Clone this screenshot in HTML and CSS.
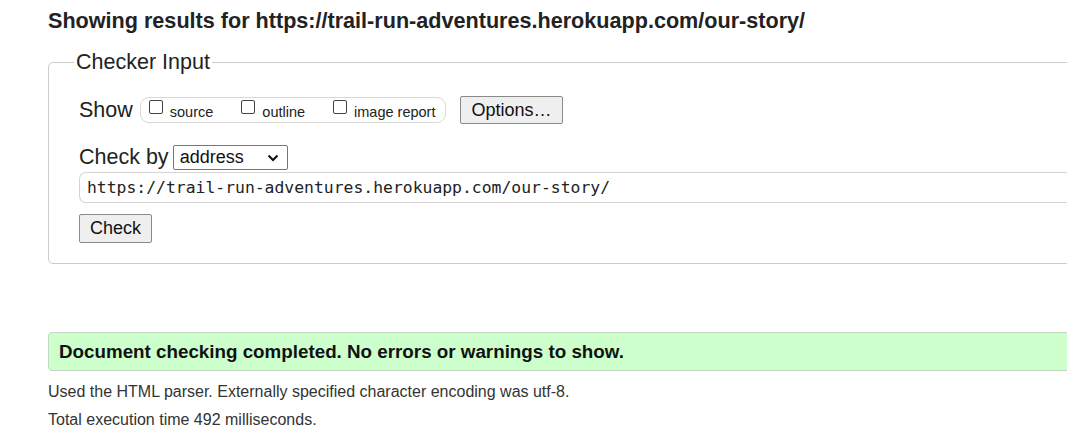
FILE: index.html
```html
<!DOCTYPE html>
<html lang="en">
<head>
<meta charset="utf-8">
<title>Nu Html Checker</title>
<link rel="stylesheet" href="styles.css">
</head>
<body>
<div class="page">
  <h2 class="title">Showing results for https://trail-run-adventures.herokuapp.com/our-story/</h2>
  <fieldset class="checker">
    <legend class="legend">Checker Input</legend>
    <div class="row show-row">
      <span class="label">Show</span>
      <div class="group">
        <label class="opt"><input type="checkbox" class="cb"><span>source</span></label>
        <label class="opt"><input type="checkbox" class="cb"><span>outline</span></label>
        <label class="opt"><input type="checkbox" class="cb"><span>image report</span></label>
      </div>
      <button class="btn btn-options" type="button">Options…</button>
    </div>
    <div class="row by-row">
      <span class="label">Check by</span>
      <div class="select">
        <span>address</span>
        <svg class="chev" width="12" height="8" viewBox="0 0 12 8"><path d="M1.5 1.5 L6 6 L10.5 1.5" fill="none" stroke="#111" stroke-width="2"/></svg>
      </div>
    </div>
    <div class="url">https://trail-run-adventures.herokuapp.com/our-story/</div>
    <div class="row check-row">
      <button class="btn btn-check" type="button">Check</button>
    </div>
  </fieldset>
  <div class="success">Document checking completed. No errors or warnings to show.</div>
  <p class="details">Used the HTML parser. Externally specified character encoding was utf-8.</p>
  <p class="details">Total execution time 492 milliseconds.</p>
</div>
</body>
</html>
```

FILE: styles.css
```css
html, body {
  margin: 0;
  padding: 0;
  background: #fff;
  overflow: hidden;
}
body {
  font-family: "Liberation Sans", Arial, sans-serif;
  color: #222;
}
.page {
  padding: 0 0 0 48px;
  width: 1100px;
}
.title {
  margin: 0;
  padding-top: 8px;
  font-size: 21.6px;
  line-height: 25px;
  font-weight: bold;
  color: #222;
}
.checker {
  margin: 17px 0 0 0;
  padding: 0 0 20px 30px;
  border: 1px solid #ccc;
  border-radius: 5px;
  min-width: 0;
}
.legend {
  margin-left: -5px;
  padding: 0 2px 0 2px;
  font-size: 21.5px;
  line-height: 25px;
  color: #222;
}
.row {
  display: flex;
  align-items: center;
}
.show-row {
  margin-top: 21px;
  height: 28px;
}
.label {
  font-size: 21.5px;
  color: #222;
}
.group {
  display: flex;
  align-items: center;
  margin-left: 7px;
  height: 24px;
  padding: 0 10px 0 8px;
  border: 1px solid #d8d8d8;
  border-radius: 9px;
  gap: 28px;
}
.opt {
  display: flex;
  align-items: center;
  font-size: 14.5px;
  color: #222;
}
.opt span {
  margin-left: 7px;
  padding-top: 3px;
}
.cb {
  appearance: none;
  -webkit-appearance: none;
  margin: 0;
  width: 14px;
  height: 14px;
  border: 1px solid #444;
  border-radius: 2px;
  background: #fff;
  box-sizing: border-box;
  position: relative;
  top: -3px;
}
.btn {
  font-family: "Liberation Sans", Arial, sans-serif;
  font-size: 18px;
  color: #111;
  background: #efefef;
  border: 1px solid #8a8a8a;
  border-radius: 2px;
  padding: 0 10px;
  margin: 0;
}
.btn-options {
  margin-left: 14px;
  height: 28px;
}
.by-row {
  margin-top: 21px;
  height: 25px;
}
.select {
  margin-left: 4px;
  width: 115px;
  height: 25px;
  box-sizing: border-box;
  border: 1px solid #767676;
  border-radius: 2px;
  display: flex;
  align-items: center;
  justify-content: space-between;
  padding: 0 8px 0 6px;
  font-size: 18px;
  color: #111;
}
.chev {
  display: block;
}
.url {
  margin-top: 2px;
  height: 31px;
  box-sizing: border-box;
  border: 1px solid #d4d4d4;
  border-right: none;
  border-radius: 7px 0 0 7px;
  display: flex;
  align-items: center;
  padding-left: 7px;
  font-family: "DejaVu Sans Mono", "Liberation Mono", monospace;
  font-size: 16.4px;
  color: #222;
}
.check-row {
  margin-top: 11px;
}
.btn-check {
  height: 29px;
  padding: 0 10px;
}
.success {
  margin-top: 68px;
  height: 39px;
  box-sizing: border-box;
  background: #ccffcc;
  border: 1px solid #c2d8c2;
  border-radius: 4px;
  display: flex;
  align-items: center;
  padding-left: 10px;
  font-size: 18.8px;
  font-weight: bold;
  color: #111;
}
.details {
  margin: 0;
  font-size: 16px;
  line-height: 28px;
  color: #333;
}
.success + .details {
  margin-top: 7px;
}
```
